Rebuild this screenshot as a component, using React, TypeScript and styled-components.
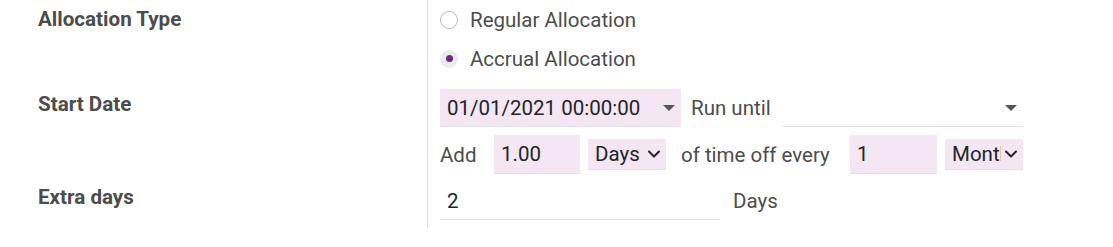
import styled, { createGlobalStyle } from 'styled-components'
import { ChevronDown } from 'lucide-react'

const GlobalStyle = createGlobalStyle`
  html, body {
    margin: 0;
    padding: 0;
    background: #fff;
  }
  body {
    font-family: Roboto, "Liberation Sans", sans-serif;
    font-size: 20.5px;
    color: #4c4c4c;
  }
`

const Form = styled.div`
  display: grid;
  grid-template-columns: 427px 1fr;
  width: 1113px;
`

const Label = styled.div<{ $top: number }>`
  padding-left: 38px;
  padding-top: ${p => p.$top}px;
  font-weight: 700;
  font-size: 20.6px;
  line-height: 26px;
  color: #4c4c4c;
`

const Cell = styled.div<{ $bottom?: number }>`
  border-left: 1px solid #dee2e6;
  padding-left: 12px;
  padding-bottom: ${p => p.$bottom ?? 0}px;
  display: flex;
  flex-direction: column;
`

const RadioRow = styled.label`
  display: flex;
  align-items: center;
  gap: 12px;
  height: 39px;
`

const RadioDot = styled.span<{ $checked?: boolean }>`
  width: 18px;
  height: 18px;
  border-radius: 50%;
  box-sizing: border-box;
  border: 1px solid ${p => (p.$checked ? '#e9ecef' : '#b5bbc1')};
  background: ${p => (p.$checked ? '#e9ecef' : '#fff')};
  display: flex;
  align-items: center;
  justify-content: center;

  &::after {
    content: '';
    display: ${p => (p.$checked ? 'block' : 'none')};
    width: 7px;
    height: 7px;
    border-radius: 50%;
    background: #7c2478;
  }
`

const Line = styled.div<{ $h: number; $mt?: number }>`
  display: flex;
  align-items: center;
  height: ${p => p.$h}px;
  margin-top: ${p => p.$mt ?? 0}px;
`

const Text = styled.span<{ $w?: number; $pl?: number; $ml?: number }>`
  box-sizing: border-box;
  width: ${p => (p.$w ? `${p.$w}px` : 'auto')};
  padding-left: ${p => p.$pl ?? 0}px;
  margin-left: ${p => p.$ml ?? 0}px;
  flex-shrink: 0;
  white-space: nowrap;
  color: #4c4c4c;
`

const Field = styled.div<{ $w: number; $h?: number; $ml?: number; $pink?: boolean; $pr?: number }>`
  display: flex;
  align-items: center;
  flex-shrink: 0;
  box-sizing: border-box;
  width: ${p => p.$w}px;
  height: ${p => p.$h ?? 38}px;
  margin-left: ${p => p.$ml ?? 0}px;
  padding-left: 7px;
  padding-right: ${p => p.$pr ?? 6}px;
  background: ${p => (p.$pink ? '#f4e6f2' : 'transparent')};
  border-bottom: 1px solid #dee2e6;
  color: #212529;
  white-space: nowrap;
  overflow: hidden;
`

const Value = styled.span`
  flex: 1;
  min-width: 0;
  overflow: hidden;
  text-overflow: clip;
`

const Caret = styled.span`
  width: 0;
  height: 0;
  border-left: 6px solid transparent;
  border-right: 6px solid transparent;
  border-top: 6px solid #555;
`

const SelectChevron = styled(ChevronDown)`
  flex-shrink: 0;
  color: #212529;
`

const Select = ({ w, ml, value }: { w: number; ml: number; value: string }) => (
  <Field $w={w} $h={31} $ml={ml} $pr={2} $pink>
    <Value>{value}</Value>
    <SelectChevron size={20} strokeWidth={2.4} />
  </Field>
)

export default function App() {
  return (
    <>
      <GlobalStyle />
      <Form>
        <Label $top={6}>Allocation Type</Label>
        <Cell $bottom={11}>
          <RadioRow>
            <RadioDot />
            <Text>Regular Allocation</Text>
          </RadioRow>
          <RadioRow>
            <RadioDot $checked />
            <Text>Accrual Allocation</Text>
          </RadioRow>
        </Cell>

        <Label $top={2}>Start Date</Label>
        <Cell $bottom={8}>
          <Line $h={38}>
            <Field $w={241} $pink>
              <Value>01/01/2021 00:00:00</Value>
              <Caret />
            </Field>
            <Text $w={101} $pl={10}>Run until</Text>
            <Field $w={241}>
              <Value />
              <Caret />
            </Field>
          </Line>
          <Line $h={39} $mt={8}>
            <Text $w={54}>Add</Text>
            <Field $w={86} $h={39} $pink>
              <Value>1.00</Value>
            </Field>
            <Select w={78} ml={8} value="Days" />
            <Text $w={184} $pl={15}>of time off every</Text>
            <Field $w={87} $h={39} $pink>
              <Value>1</Value>
            </Field>
            <Select w={78} ml={8} value="Months" />
          </Line>
        </Cell>

        <Label $top={2}>Extra days</Label>
        <Cell $bottom={8}>
          <Line $h={38}>
            <Field $w={280}>
              <Value>2</Value>
            </Field>
            <Text $ml={13}>Days</Text>
          </Line>
        </Cell>
      </Form>
    </>
  )
}
